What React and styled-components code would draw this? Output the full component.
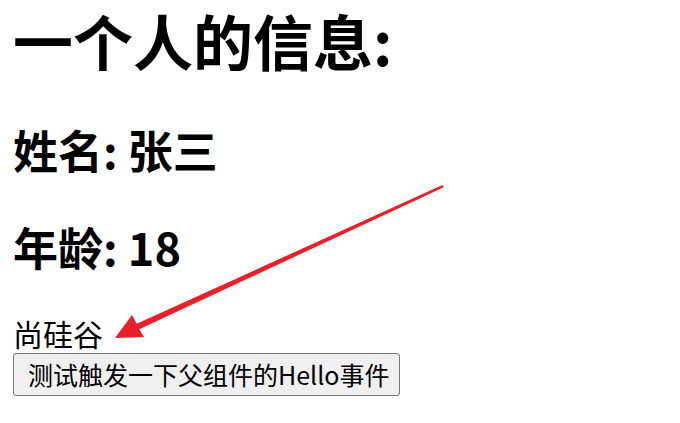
import React from "react";
import styled, { createGlobalStyle } from "styled-components";

const Global = createGlobalStyle`
  html, body { margin: 0; padding: 0; background: #fff; }
  body { font-family: "Noto Sans CJK SC", "Noto Sans", sans-serif; color: #000; }
`;

const Page = styled.div`
  position: relative;
  width: 680px;
  height: 423px;
  overflow: hidden;
  padding: 0 0 0 13px;
  box-sizing: border-box;
`;

const Title = styled.h1`
  margin: 0;
  font-size: 60px;
  line-height: 80px;
  font-weight: 700;
`;

const Field = styled.h2`
  margin: ${(p) => p.$gap}px 0 0;
  font-size: 45px;
  line-height: 54px;
  font-weight: 700;
`;

const School = styled.div`
  margin-top: 41px;
  font-size: 30px;
  line-height: 36px;
`;

const Button = styled.button`
  display: block;
  margin-top: 2px;
  width: 387px;
  height: 43px;
  padding: 0 14px;
  box-sizing: border-box;
  font-family: "Noto Sans CJK SC", "Noto Sans", sans-serif;
  font-size: 25px;
  line-height: 41px;
  color: #000;
  background: #efefef;
  border: 1px solid #767676;
  border-radius: 3px;
  text-align: left;
  white-space: nowrap;
`;

const Annotation = styled.svg`
  position: absolute;
  left: 0;
  top: 0;
  pointer-events: none;
`;

export default function App() {
  return (
    <>
      <Global />
      <Page>
        <Title>一个人的信息:</Title>
        <Field $gap={43}>姓名: 张三</Field>
        <Field $gap={43}>年龄: 18</Field>
        <School>尚硅谷</School>
        <Button>测试触发一下父组件的Hello事件</Button>
        <Annotation width="680" height="423" viewBox="0 0 680 423">
          <polygon
            fill="#ea1f29"
            points="115,338 132,315 136.7,323.8 442.4,185 443.8,187.2 139.3,329.2 144,337"
          />
        </Annotation>
      </Page>
    </>
  );
}
